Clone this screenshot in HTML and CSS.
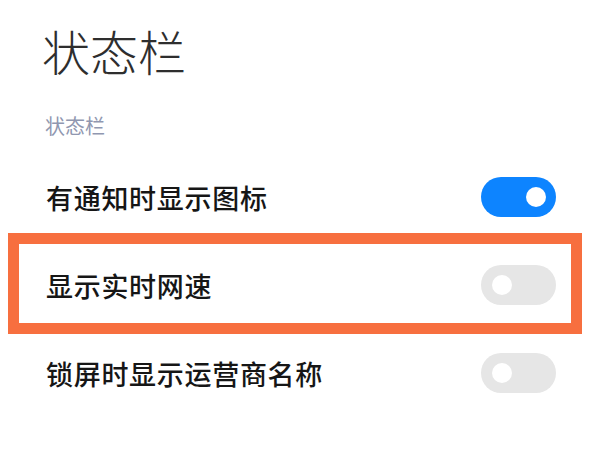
FILE: index.html
```html
<!DOCTYPE html>
<html lang="zh-CN">
<head>
<meta charset="utf-8">
<title>状态栏</title>
<link rel="stylesheet" href="styles.css">
</head>
<body>
<div class="page">
  <h1 class="title">状态栏</h1>
  <div class="section">状态栏</div>
  <div class="list">
    <div class="row">
      <span class="label">有通知时显示图标</span>
      <span class="toggle on"><span class="knob"></span></span>
    </div>
    <div class="row highlighted">
      <span class="label">显示实时网速</span>
      <span class="toggle"><span class="knob"></span></span>
      <span class="mark"></span>
    </div>
    <div class="row">
      <span class="label">锁屏时显示运营商名称</span>
      <span class="toggle"><span class="knob"></span></span>
    </div>
  </div>
</div>
</body>
</html>
```

FILE: styles.css
```css
html, body {
  margin: 0;
  padding: 0;
  background: #ffffff;
}
body {
  width: 600px;
  height: 450px;
  overflow: hidden;
  font-family: "Noto Sans CJK SC", "Noto Sans", sans-serif;
}
.page {
  display: flex;
  flex-direction: column;
}
.title {
  margin: 19px 0 0 42px;
  font-size: 48px;
  line-height: 62px;
  font-weight: 300;
  color: #2e2e2e;
}
.section {
  margin: 33px 0 0 45px;
  font-size: 20px;
  line-height: 24px;
  color: #9097b0;
}
.list {
  margin-top: 15px;
  display: flex;
  flex-direction: column;
}
.row {
  position: relative;
  height: 88px;
  display: flex;
  align-items: center;
  justify-content: space-between;
  padding: 0 44px 0 46px;
}
.label {
  font-size: 27px;
  font-weight: 500;
  color: #161616;
  letter-spacing: 0.7px;
}
.toggle {
  width: 75px;
  height: 40px;
  border-radius: 20px;
  background: #e6e6e6;
  display: flex;
  align-items: center;
  padding: 0 10px 0 11px;
  box-sizing: border-box;
}
.toggle.on {
  background: #0d84ff;
  justify-content: flex-end;
}
.knob {
  width: 20px;
  height: 20px;
  border-radius: 50%;
  background: #ffffff;
}
.mark {
  position: absolute;
  left: 8px;
  top: -8px;
  width: 574px;
  height: 101px;
  box-sizing: border-box;
  border: 11px solid #f76f3f;
}
```
